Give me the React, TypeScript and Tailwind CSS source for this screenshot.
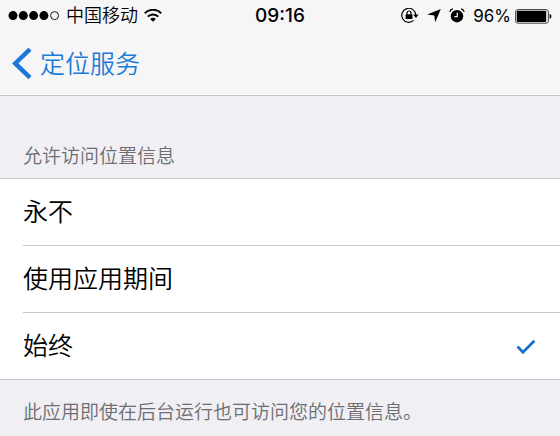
import { useState } from "react";

const FONT = "font-[Inter,'Noto_Sans_CJK_SC',sans-serif]";

const OPTIONS = [
  { id: "never", label: "永不" },
  { id: "while-using", label: "使用应用期间" },
  { id: "always", label: "始终" },
];

function SignalDots() {
  return (
    <svg width="52" height="10" viewBox="0 0 52 10" aria-hidden="true">
      {[5, 15.3, 25.6, 35.9].map((cx) => (
        <circle key={cx} cx={cx} cy="4.6" r="4.5" fill="#000" />
      ))}
      <circle cx="46.6" cy="4.6" r="4" fill="none" stroke="#000" strokeWidth="0.9" />
    </svg>
  );
}

function WifiIcon() {
  return (
    <svg width="18" height="14" viewBox="0 0 18 14" fill="none" stroke="#000" strokeWidth="2" aria-hidden="true">
      <path d="M0.8 4.2a11.6 11.6 0 0 1 16.4 0" />
      <path d="M3.8 7.6a7.2 7.2 0 0 1 10.4 0" />
      <path d="M9 12.8 6.2 10a4 4 0 0 1 5.6 0z" fill="#000" stroke="none" />
    </svg>
  );
}

function RotationLockIcon() {
  return (
    <svg width="18" height="16" viewBox="0 0 18 16" fill="none" aria-hidden="true">
      <path d="M12.6 12.4A7 7 0 1 1 14.8 7" stroke="#000" strokeWidth="1.2" />
      <path d="M12.2 6.6h5.4L14.9 10z" fill="#000" />
      <rect x="4.6" y="6.2" width="6.8" height="4.8" rx="0.5" fill="#000" />
      <path d="M6 6.4V5a2 2 0 0 1 4 0v1.4" stroke="#000" strokeWidth="1.2" />
    </svg>
  );
}

function LocationIcon() {
  return (
    <svg width="14" height="14" viewBox="0 0 14 14" aria-hidden="true">
      <path d="M13.8 0 8.2 13.2 7.3 6.4 0.2 5.6z" fill="#000" />
    </svg>
  );
}

function AlarmIcon() {
  return (
    <svg width="16" height="16" viewBox="0 0 16 16" fill="none" aria-hidden="true">
      <circle cx="8" cy="8.2" r="6.2" fill="#000" />
      <path d="M8.3 4.6v4.1H5.4" stroke="#f6f6f7" strokeWidth="1.2" />
      <path d="M0.8 3.8A4 4 0 0 1 4 0.8M15.2 3.8A4 4 0 0 0 12 0.8" stroke="#000" strokeWidth="1.2" />
    </svg>
  );
}

function BatteryIcon() {
  return (
    <svg width="37" height="15" viewBox="0 0 37 15" aria-hidden="true">
      <rect x="0.6" y="0.6" width="32.8" height="13.6" rx="2.4" fill="none" stroke="#444" strokeWidth="1" />
      <rect x="1.8" y="1.8" width="29.4" height="11.2" rx="1" fill="#000" />
      <path d="M34.6 5c1.2.2 1.8 1.2 1.8 2.4s-.6 2.2-1.8 2.4z" fill="#000" />
    </svg>
  );
}

function StatusBar() {
  return (
    <div className="grid h-8 grid-cols-[1fr_auto_1fr] items-center px-2 text-lg leading-8 text-black">
      <div className="flex items-center gap-1.5">
        <SignalDots />
        <span className="font-[350]">中国移动</span>
        <WifiIcon />
      </div>
      <time className="text-[19px] leading-8 font-medium">09:16</time>
      <div className="flex items-center justify-end gap-2">
        <RotationLockIcon />
        <LocationIcon />
        <AlarmIcon />
        <div className="flex items-center gap-1">
          <span className="text-[17px]">96%</span>
          <BatteryIcon />
        </div>
      </div>
    </div>
  );
}

export default function App() {
  const [selected, setSelected] = useState("always");

  return (
    <div className={`min-h-screen bg-[#efeff4] ${FONT}`}>
      <header className="border-b border-[#c4c4c8] bg-[#f6f6f7]">
        <StatusBar />
        <nav className="flex h-[63px] items-center px-3">
          <a href="#location-services" className="flex items-center gap-2 text-[25px] leading-8 font-[350] text-[#1b7bd8]">
            <svg width="20" height="32" viewBox="0 0 20 32" fill="none" aria-hidden="true">
              <path d="M18 1.2 3.2 15.4 18 29.6" stroke="#1878dc" strokeWidth="4.4" />
            </svg>
            定位服务
          </a>
        </nav>
      </header>

      <main>
        <fieldset>
          <legend className="px-[23px] pt-12 pb-2 text-[19px] leading-[26px] font-[350] text-[#6d6d72]">
            允许访问位置信息
          </legend>
          <div className="border-y border-[#c8c7cc] bg-white pl-[23px]">
            {OPTIONS.map((option) => (
              <label
                key={option.id}
                className="flex h-[67px] cursor-pointer items-center justify-between border-b border-[#c8c7cc] pt-0.5 pr-6 text-[25px] font-[350] text-black last:h-[66px] last:border-b-0"
              >
                {option.label}
                <input
                  type="radio"
                  name="location-access"
                  value={option.id}
                  checked={selected === option.id}
                  onChange={() => setSelected(option.id)}
                  className="peer sr-only"
                />
                <svg className="hidden peer-checked:block" width="20" height="16" viewBox="0 0 20 16" fill="none" aria-hidden="true">
                  <path d="M1.5 7.6 7 13.2 18.4 1.8" stroke="#1a73c8" strokeWidth="2.8" />
                </svg>
              </label>
            ))}
          </div>
        </fieldset>
        <p className="px-[23px] pt-5 text-[19px] leading-[26px] font-[350] text-[#6d6d72]">
          此应用即使在后台运行也可访问您的位置信息。
        </p>
      </main>
    </div>
  );
}
